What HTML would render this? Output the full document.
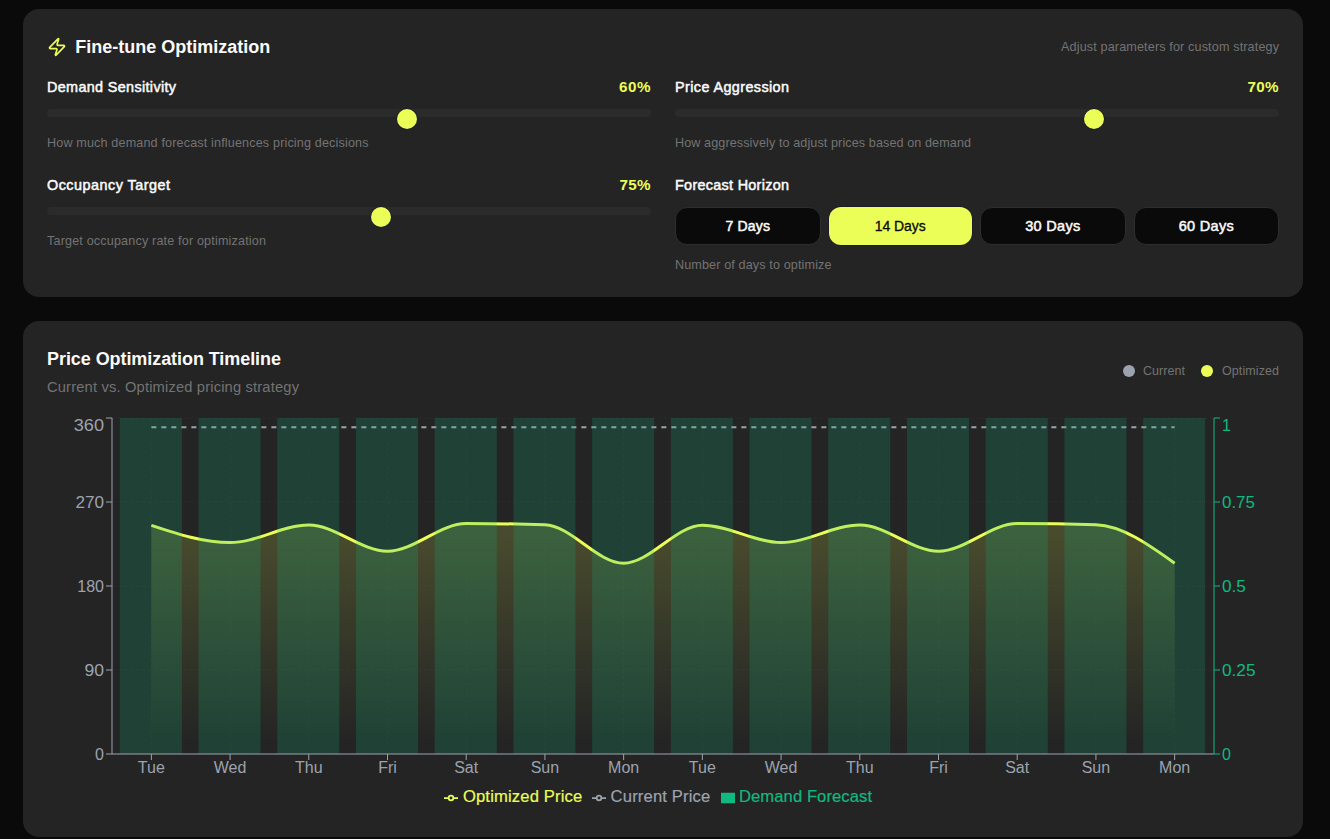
<!DOCTYPE html>
<html lang="en"><head><meta charset="utf-8"><title>Price Optimization</title>
<style>
html,body{margin:0;padding:0}
body{width:1330px;height:839px;background:#0a0a0a;position:relative;overflow:hidden;font-family:"Liberation Sans", sans-serif;}
.card{position:absolute;left:23px;width:1280px;background:#242424;border-radius:16px}
.t{position:absolute;white-space:nowrap;line-height:1;margin:0;padding:0;display:block}
.track{position:absolute;width:604px;height:8px;border-radius:4px;background:#2b2b2b}
.thumb{position:absolute;width:20px;height:20px;border-radius:50%;background:#ebfd57;box-shadow:0 0 0 0.5px #15152a}
.btn{position:absolute;top:207px;height:38px;box-sizing:border-box;margin:0;padding:0;border-radius:12px;background:#0a0a0a;border:1px solid #2e2e2e;font:inherit;color:inherit;appearance:none;-webkit-appearance:none;cursor:pointer;overflow:visible}
.btn.on{background:#ebfd57;border:none;box-shadow:0 0 0 0.5px #15152a}
.dot{position:absolute;width:12px;height:12px;border-radius:50%;top:365px}
</style></head>
<body>
<section class="panel" aria-label="Fine-tune Optimization">
<div class="card" style="top:9px;height:288px"></div>
<svg style="position:absolute;left:47px;top:37px" width="20" height="20" viewBox="0 0 24 24" fill="none" stroke="#ebfd57" stroke-width="2" stroke-linecap="round" stroke-linejoin="round"><path d="M4 14a1 1 0 0 1-.78-1.63l9.9-10.2a.5.5 0 0 1 .86.46l-1.92 6.02A1 1 0 0 0 13 10h7a1 1 0 0 1 .78 1.63l-9.9 10.2a.5.5 0 0 1-.86-.46l1.92-6.02A1 1 0 0 0 11 14z"/></svg>
<div class="track" style="left:47px;top:109px"></div><div class="thumb" style="left:397.4px;top:109px"></div>
<div class="track" style="left:675px;top:109px"></div><div class="thumb" style="left:1083.8px;top:109px"></div>
<div class="track" style="left:47px;top:207px"></div><div class="thumb" style="left:371.4px;top:207px"></div>
<h2 class="t" style="left:75.30px;top:38.00px;font-size:18px;color:#fafafa;font-weight:700;">Fine-tune Optimization</h2>
<p class="t" style="left:1061.00px;top:41.00px;font-size:12.6px;color:#737373;letter-spacing:0.145px;">Adjust parameters for custom strategy</p>
<label class="t" style="left:47.00px;top:80.00px;font-size:14.4px;color:#fafafa;letter-spacing:0.343px;-webkit-text-stroke:0.5px #fafafa;">Demand Sensitivity</label>
<output class="t" style="left:618.90px;top:79.00px;font-size:15.2px;color:#ebfd57;font-weight:700;letter-spacing:0.597px;">60%</output>
<p class="t" style="left:47.00px;top:137.00px;font-size:12.6px;color:#737373;letter-spacing:0.152px;">How much demand forecast influences pricing decisions</p>
<label class="t" style="left:47.00px;top:178.00px;font-size:14.4px;color:#fafafa;letter-spacing:0.484px;-webkit-text-stroke:0.5px #fafafa;">Occupancy Target</label>
<output class="t" style="left:619.50px;top:177.00px;font-size:15.2px;color:#ebfd57;font-weight:700;letter-spacing:0.297px;">75%</output>
<p class="t" style="left:47.00px;top:235.00px;font-size:12.6px;color:#737373;letter-spacing:0.167px;">Target occupancy rate for optimization</p>
<label class="t" style="left:675.00px;top:80.00px;font-size:14.4px;color:#fafafa;letter-spacing:0.400px;-webkit-text-stroke:0.5px #fafafa;">Price Aggression</label>
<output class="t" style="left:1247.50px;top:79.00px;font-size:15.2px;color:#ebfd57;font-weight:700;letter-spacing:0.297px;">70%</output>
<p class="t" style="left:675.00px;top:137.00px;font-size:12.6px;color:#737373;letter-spacing:0.100px;">How aggressively to adjust prices based on demand</p>
<label class="t" style="left:675.00px;top:178.00px;font-size:14.4px;color:#fafafa;letter-spacing:0.295px;-webkit-text-stroke:0.5px #fafafa;">Forecast Horizon</label>
<p class="t" style="left:675.00px;top:259.00px;font-size:12.6px;color:#737373;letter-spacing:0.128px;">Number of days to optimize</p>
<div class="horizon" role="group" aria-label="Forecast Horizon">
<button type="button" class="btn" style="left:675px;width:145.5px"><span class="t" style="left:49.55px;top:11.00px;font-size:14px;color:#fafafa;letter-spacing:0.164px;-webkit-text-stroke:0.5px #fafafa;">7 Days</span></button>
<button type="button" class="btn on" style="left:828.5px;width:143.5px"><span class="t" style="left:46.25px;top:12.00px;font-size:14px;color:#0a0a0a;letter-spacing:-0.060px;-webkit-text-stroke:0.3px #0a0a0a;">14 Days</span></button>
<button type="button" class="btn" style="left:980px;width:145.5px"><span class="t" style="left:44.25px;top:11.00px;font-size:14.5px;color:#fafafa;letter-spacing:0.299px;-webkit-text-stroke:0.5px #fafafa;">30 Days</span></button>
<button type="button" class="btn" style="left:1133.5px;width:145.5px"><span class="t" style="left:44.25px;top:11.00px;font-size:14.5px;color:#fafafa;letter-spacing:0.299px;-webkit-text-stroke:0.5px #fafafa;">60 Days</span></button>
</div>
</section>
<section class="panel" aria-label="Price Optimization Timeline">
<div class="card" style="top:321px;height:516px"></div>
<div class="dot" style="left:1123px;background:#9ca3af"></div>
<div class="dot" style="left:1201px;background:#ebfd57"></div>
<svg class="chart" width="1232" height="400" viewBox="0 0 1232 400" style="position:absolute;left:47px;top:413px;overflow:visible">
<defs><linearGradient id="colorPrice" x1="0" y1="0" x2="0" y2="1"><stop offset="5%" stop-color="#ebfd57" stop-opacity="0.18"/><stop offset="95%" stop-color="#ebfd57" stop-opacity="0"/></linearGradient></defs>
<g stroke="#ffffff" stroke-opacity="0.03" stroke-dasharray="3 3" fill="none"><line x1="65" y1="341.0" x2="1167" y2="341.0"/><line x1="65" y1="257.0" x2="1167" y2="257.0"/><line x1="65" y1="173.0" x2="1167" y2="173.0"/><line x1="65" y1="89.0" x2="1167" y2="89.0"/><line x1="65" y1="5.0" x2="1167" y2="5.0"/><line x1="104.36" y1="5" x2="104.36" y2="341"/><line x1="183.07" y1="5" x2="183.07" y2="341"/><line x1="261.79" y1="5" x2="261.79" y2="341"/><line x1="340.50" y1="5" x2="340.50" y2="341"/><line x1="419.21" y1="5" x2="419.21" y2="341"/><line x1="497.93" y1="5" x2="497.93" y2="341"/><line x1="576.64" y1="5" x2="576.64" y2="341"/><line x1="655.36" y1="5" x2="655.36" y2="341"/><line x1="734.07" y1="5" x2="734.07" y2="341"/><line x1="812.79" y1="5" x2="812.79" y2="341"/><line x1="891.50" y1="5" x2="891.50" y2="341"/><line x1="970.21" y1="5" x2="970.21" y2="341"/><line x1="1048.93" y1="5" x2="1048.93" y2="341"/><line x1="1127.64" y1="5" x2="1127.64" y2="341"/></g>
<path d="M104.36,112.30C130.60,120.95,156.83,129.60,183.07,129.60C209.31,129.60,235.55,112.00,261.79,112.00C288.02,112.00,314.26,138.20,340.50,138.20C366.74,138.20,392.98,110.50,419.21,110.50C445.45,110.50,471.69,110.93,497.93,111.80C524.17,112.67,550.40,150.20,576.64,150.20C602.88,150.20,629.12,112.30,655.36,112.30C681.60,112.30,707.83,129.60,734.07,129.60C760.31,129.60,786.55,112.00,812.79,112.00C839.02,112.00,865.26,138.20,891.50,138.20C917.74,138.20,943.98,110.50,970.21,110.50C996.45,110.50,1022.69,110.93,1048.93,111.80C1075.17,112.67,1101.40,131.43,1127.64,150.20L1127.64,341L104.36,341Z" fill="url(#colorPrice)" stroke="none"/>
<path d="M104.36,112.30C130.60,120.95,156.83,129.60,183.07,129.60C209.31,129.60,235.55,112.00,261.79,112.00C288.02,112.00,314.26,138.20,340.50,138.20C366.74,138.20,392.98,110.50,419.21,110.50C445.45,110.50,471.69,110.93,497.93,111.80C524.17,112.67,550.40,150.20,576.64,150.20C602.88,150.20,629.12,112.30,655.36,112.30C681.60,112.30,707.83,129.60,734.07,129.60C760.31,129.60,786.55,112.00,812.79,112.00C839.02,112.00,865.26,138.20,891.50,138.20C917.74,138.20,943.98,110.50,970.21,110.50C996.45,110.50,1022.69,110.93,1048.93,111.80C1075.17,112.67,1101.40,131.43,1127.64,150.20" fill="none" stroke="#ebfd57" stroke-width="3"/>
<path d="M104.36,14.33L1127.64,14.33" fill="none" stroke="#9ca3af" stroke-width="2" stroke-dasharray="5 5"/>
<g fill="#10b981" fill-opacity="0.2"><rect x="72.87" y="5" width="62" height="336"/><rect x="151.59" y="5" width="62" height="336"/><rect x="230.30" y="5" width="62" height="336"/><rect x="309.01" y="5" width="62" height="336"/><rect x="387.73" y="5" width="62" height="336"/><rect x="466.44" y="5" width="62" height="336"/><rect x="545.16" y="5" width="62" height="336"/><rect x="623.87" y="5" width="62" height="336"/><rect x="702.59" y="5" width="62" height="336"/><rect x="781.30" y="5" width="62" height="336"/><rect x="860.01" y="5" width="62" height="336"/><rect x="938.73" y="5" width="62" height="336"/><rect x="1017.44" y="5" width="62" height="336"/><rect x="1096.16" y="5" width="62" height="336"/></g>
<g font-family='"Liberation Sans", sans-serif' font-size="16"><g stroke="#9ca3af" fill="none"><line x1="65" y1="341" x2="1167" y2="341"/><line x1="104.36" y1="341" x2="104.36" y2="347"/><line x1="183.07" y1="341" x2="183.07" y2="347"/><line x1="261.79" y1="341" x2="261.79" y2="347"/><line x1="340.50" y1="341" x2="340.50" y2="347"/><line x1="419.21" y1="341" x2="419.21" y2="347"/><line x1="497.93" y1="341" x2="497.93" y2="347"/><line x1="576.64" y1="341" x2="576.64" y2="347"/><line x1="655.36" y1="341" x2="655.36" y2="347"/><line x1="734.07" y1="341" x2="734.07" y2="347"/><line x1="812.79" y1="341" x2="812.79" y2="347"/><line x1="891.50" y1="341" x2="891.50" y2="347"/><line x1="970.21" y1="341" x2="970.21" y2="347"/><line x1="1048.93" y1="341" x2="1048.93" y2="347"/><line x1="1127.64" y1="341" x2="1127.64" y2="347"/></g><g fill="#9ca3af" text-anchor="middle"><text x="104.36" y="349" dy="0.71em">Tue</text><text x="183.07" y="349" dy="0.71em">Wed</text><text x="261.79" y="349" dy="0.71em">Thu</text><text x="340.50" y="349" dy="0.71em">Fri</text><text x="419.21" y="349" dy="0.71em">Sat</text><text x="497.93" y="349" dy="0.71em">Sun</text><text x="576.64" y="349" dy="0.71em">Mon</text><text x="655.36" y="349" dy="0.71em">Tue</text><text x="734.07" y="349" dy="0.71em">Wed</text><text x="812.79" y="349" dy="0.71em">Thu</text><text x="891.50" y="349" dy="0.71em">Fri</text><text x="970.21" y="349" dy="0.71em">Sat</text><text x="1048.93" y="349" dy="0.71em">Sun</text><text x="1127.64" y="349" dy="0.71em">Mon</text></g><g stroke="#9ca3af" fill="none"><line x1="65" y1="5" x2="65" y2="341"/><line x1="59" y1="341.0" x2="65" y2="341.0"/><line x1="59" y1="257.0" x2="65" y2="257.0"/><line x1="59" y1="173.0" x2="65" y2="173.0"/><line x1="59" y1="89.0" x2="65" y2="89.0"/><line x1="59" y1="5.0" x2="65" y2="5.0"/></g><g fill="#9ca3af" text-anchor="end"><text x="57" y="346.68">0</text><text x="57" y="262.68" textLength="19.5" lengthAdjust="spacingAndGlyphs">90</text><text x="57" y="178.68">180</text><text x="57" y="94.68" textLength="28.5" lengthAdjust="spacingAndGlyphs">270</text><text x="57" y="17.98" textLength="30.2" lengthAdjust="spacingAndGlyphs">360</text></g><g stroke="#10b981" fill="none"><line x1="1167" y1="5" x2="1167" y2="341"/><line x1="1167" y1="341.0" x2="1173" y2="341.0"/><line x1="1167" y1="257.0" x2="1173" y2="257.0"/><line x1="1167" y1="173.0" x2="1173" y2="173.0"/><line x1="1167" y1="89.0" x2="1173" y2="89.0"/><line x1="1167" y1="5.0" x2="1173" y2="5.0"/></g><g fill="#10b981" text-anchor="start"><text x="1175" y="346.68">0</text><text x="1175" y="262.68" textLength="33.5" lengthAdjust="spacingAndGlyphs">0.25</text><text x="1175" y="178.68" textLength="23.9" lengthAdjust="spacingAndGlyphs">0.5</text><text x="1175" y="94.68" textLength="32.9" lengthAdjust="spacingAndGlyphs">0.75</text><text x="1175" y="17.98">1</text></g></g>
</svg>
<svg style="position:absolute;left:443.8px;top:791px" width="14" height="14" viewBox="0 0 32 32"><path stroke-width="4" fill="none" stroke="#ebfd57" d="M0,16h10.666666666666666A5.333333333333333,5.333333333333333,0,1,1,21.333333333333332,16H32M21.333333333333332,16A5.333333333333333,5.333333333333333,0,1,1,10.666666666666666,16"/></svg><svg style="position:absolute;left:592px;top:791px" width="14" height="14" viewBox="0 0 32 32"><path stroke-width="4" fill="none" stroke="#9ca3af" d="M0,16h10.666666666666666A5.333333333333333,5.333333333333333,0,1,1,21.333333333333332,16H32M21.333333333333332,16A5.333333333333333,5.333333333333333,0,1,1,10.666666666666666,16"/></svg><svg style="position:absolute;left:720.9px;top:791px" width="14" height="14" viewBox="0 0 32 32"><path stroke="none" fill="#10b981" d="M0,4h32v24h-32z"/></svg>
<h2 class="t" style="left:47.00px;top:350.00px;font-size:18px;color:#fafafa;font-weight:700;letter-spacing:-0.067px;">Price Optimization Timeline</h2>
<p class="t" style="left:47.00px;top:380.00px;font-size:14.7px;color:#737373;letter-spacing:0.170px;">Current vs. Optimized pricing strategy</p>
<span class="t" style="left:1143.00px;top:365.00px;font-size:12.5px;color:#737373;letter-spacing:0.052px;">Current</span>
<span class="t" style="left:1222.00px;top:365.00px;font-size:12.5px;color:#737373;letter-spacing:0.090px;">Optimized</span>
<span class="t" style="left:462.90px;top:789.00px;font-size:16.6px;color:#ebfd57;letter-spacing:0.163px;-webkit-text-stroke:0.2px #ebfd57;">Optimized Price</span>
<span class="t" style="left:610.60px;top:789.00px;font-size:16.6px;color:#9ca3af;letter-spacing:0.163px;-webkit-text-stroke:0.2px #9ca3af;">Current Price</span>
<span class="t" style="left:739.00px;top:789.00px;font-size:16.6px;color:#10b981;letter-spacing:0.079px;-webkit-text-stroke:0.2px #10b981;">Demand Forecast</span>
</section>
</body></html>
